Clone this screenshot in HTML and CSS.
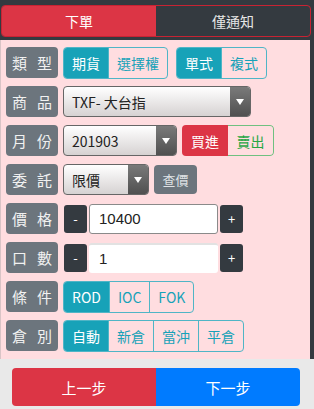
FILE: index.html
```html
<!DOCTYPE html>
<html lang="zh-Hant">
<head>
    <meta charset="UTF-8">
    <meta name="viewport" content="width=device-width, initial-scale=1.0">
    <title>下單</title>
    <link rel="stylesheet" href="styles.css">
</head>
<body>

<div class="main">
    <div class="tabs">
        <div class="tab active">下單</div>
        <div class="tab">僅通知</div>
    </div>

    <div class="panel">
        <div class="row">
            <div class="label"><span>類</span><span>型</span></div>
            <div class="group">
                <span class="opt on">期貨</span>
                <span class="opt">選擇權</span>
            </div>
            <div class="group">
                <span class="opt on">單式</span>
                <span class="opt">複式</span>
            </div>
        </div>

        <div class="row">
            <div class="label"><span>商</span><span>品</span></div>
            <div class="select wide">
                <span class="select-text">TXF- 大台指</span>
                <span class="arrow"></span>
            </div>
        </div>

        <div class="row">
            <div class="label"><span>月</span><span>份</span></div>
            <div class="select month">
                <span class="select-text">201903</span>
                <span class="arrow"></span>
            </div>
            <div class="side">
                <span class="buy">買進</span>
                <span class="sell">賣出</span>
            </div>
        </div>

        <div class="row">
            <div class="label"><span>委</span><span>託</span></div>
            <div class="select kind">
                <span class="select-text">限價</span>
                <span class="arrow"></span>
            </div>
            <button class="query">查價</button>
        </div>

        <div class="row">
            <div class="label"><span>價</span><span>格</span></div>
            <div class="stepper">
                <button class="step">-</button>
                <div class="field">10400</div>
                <button class="step">+</button>
            </div>
        </div>

        <div class="row">
            <div class="label"><span>口</span><span>數</span></div>
            <div class="stepper">
                <button class="step">-</button>
                <div class="field plain">1</div>
                <button class="step">+</button>
            </div>
        </div>

        <div class="row">
            <div class="label"><span>條</span><span>件</span></div>
            <div class="group">
                <span class="opt on">ROD</span>
                <span class="opt">IOC</span>
                <span class="opt">FOK</span>
            </div>
        </div>

        <div class="row">
            <div class="label"><span>倉</span><span>別</span></div>
            <div class="group">
                <span class="opt on">自動</span>
                <span class="opt">新倉</span>
                <span class="opt">當沖</span>
                <span class="opt">平倉</span>
            </div>
        </div>
    </div>
</div>

<div class="footer">
    <button class="prev">上一步</button>
    <button class="next">下一步</button>
</div>

</body>
</html>
```

FILE: styles.css
```css
/* General */
body {
    margin: 0;
    background-color: #e9e9e9;
    font-family: "Noto Sans CJK TC", "Noto Sans", sans-serif;
    width: 314px;
}

button {
    font-family: inherit;
    cursor: pointer;
}

/* Top area */
.main {
    background-color: #343a40;
    padding-top: 5px;
}

.tabs {
    display: flex;
    margin: 0 3px 3px 1px;
    height: 30px;
    border: 1px solid #c82333;
    border-radius: 4px;
    overflow: hidden;
}

.tab {
    flex: 1;
    display: flex;
    align-items: center;
    justify-content: center;
    font-size: 14px;
    color: #e6e6e6;
}

.tab.active {
    background-color: #dc3545;
    color: #fff;
}

/* Form panel */
.panel {
    background-color: #ffdde0;
    margin-right: 4px;
    border-left: 1px solid #d9c4c6;
    padding: 7px 0 8px 5px;
}

.row {
    display: flex;
    align-items: center;
    height: 31px;
    margin-bottom: 8px;
}

.row:last-child {
    margin-bottom: 0;
}

.label {
    display: flex;
    justify-content: space-between;
    align-items: center;
    box-sizing: border-box;
    width: 52px;
    height: 31px;
    padding: 0 6px;
    margin-right: 5px;
    background-color: #6c757d;
    color: #f1f1f1;
    border-radius: 4px;
    font-size: 15px;
}

/* Toggle groups */
.group {
    display: flex;
    height: 30px;
    margin-right: 8px;
    border: 1px solid #4fb5c6;
    border-radius: 4px;
    overflow: hidden;
}

.opt {
    display: flex;
    align-items: center;
    padding: 0 8px;
    font-size: 14px;
    color: #17a2b8;
    border-left: 1px solid #4fb5c6;
}

.opt:first-child {
    border-left: none;
}

.opt.on {
    background-color: #17a2b8;
    color: #fff;
}

/* Selects */
.select {
    display: flex;
    box-sizing: border-box;
    height: 31px;
    border: 1px solid #666;
    border-radius: 4px;
    overflow: hidden;
    background: linear-gradient(#ffffff, #d6d2d2);
}

.select.wide { width: 188px; }
.select.month { width: 114px; }
.select.kind { width: 86px; }

.select-text {
    flex: 1;
    display: flex;
    align-items: center;
    padding-left: 8px;
    font-size: 14px;
    color: #222;
}

.arrow {
    width: 20px;
    display: flex;
    align-items: center;
    justify-content: center;
    background: linear-gradient(#7a7a7a, #505050);
}

.arrow::after {
    content: "";
    border-left: 4px solid transparent;
    border-right: 4px solid transparent;
    border-top: 6px solid #fff;
}

/* Buy / Sell */
.side {
    display: flex;
    height: 31px;
    margin-left: 5px;
    border-radius: 4px;
    overflow: hidden;
}

.side span {
    display: flex;
    align-items: center;
    justify-content: center;
    box-sizing: border-box;
    width: 46px;
    font-size: 14px;
}

.buy {
    background-color: #dc3545;
    color: #fff;
}

.sell {
    border: 1px solid #6fc080;
    border-left: none;
    border-radius: 0 4px 4px 0;
    color: #28a745;
}

.query {
    height: 29px;
    width: 43px;
    margin-left: 5px;
    padding: 0;
    border: none;
    border-radius: 4px;
    background-color: #6c757d;
    color: #dfe2e5;
    font-size: 13px;
}

/* Price / quantity */
.stepper {
    display: flex;
    align-items: center;
    gap: 2px;
    margin-left: 1px;
}

.step {
    width: 23px;
    height: 28px;
    padding: 0;
    border: none;
    border-radius: 3px;
    background-color: #343a40;
    color: #fff;
    font-size: 13px;
}

.field {
    box-sizing: border-box;
    width: 129px;
    height: 30px;
    display: flex;
    align-items: center;
    padding-left: 9px;
    background-color: #fff;
    border: 1px solid #8a8a8a;
    border-radius: 3px;
    font-family: "Liberation Sans", sans-serif;
    font-size: 15px;
    color: #222;
}

.field.plain {
    border: none;
    border-top: 2px solid #e2e2e2;
    padding-left: 10px;
}

/* Footer */
.footer {
    display: flex;
    padding: 9px 14px 5px 12px;
}

.footer button {
    flex: 1;
    height: 38px;
    border: none;
    color: #fff;
    font-size: 15px;
}

.prev {
    background-color: #dc3545;
    border-radius: 4px 0 0 4px;
}

.next {
    background-color: #007bff;
    border-radius: 0 4px 4px 0;
}
```
